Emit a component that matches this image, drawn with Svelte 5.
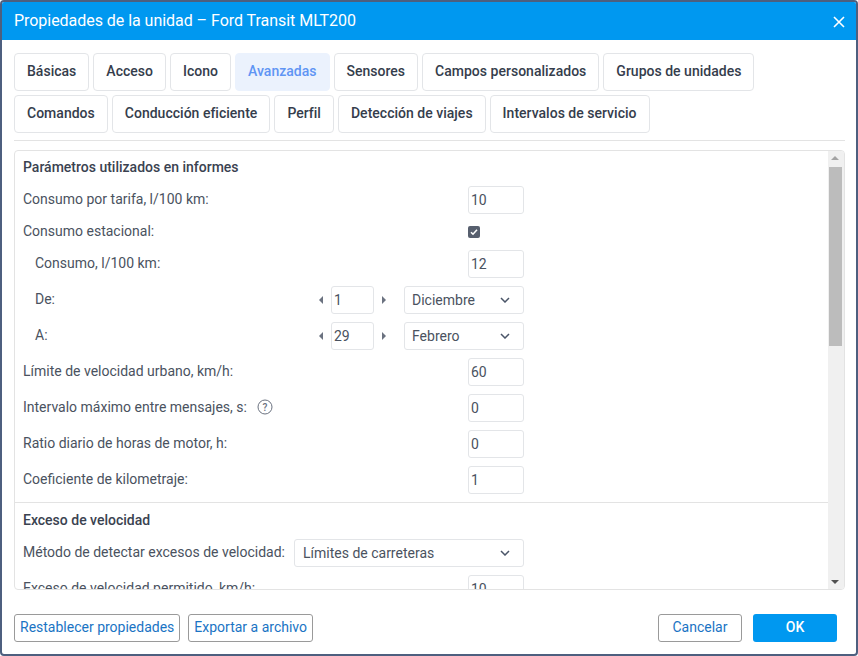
<script>
  const tabRows = [
    ['Básicas', 'Acceso', 'Icono', 'Avanzadas', 'Sensores', 'Campos personalizados', 'Grupos de unidades'],
    ['Comandos', 'Conducción eficiente', 'Perfil', 'Detección de viajes', 'Intervalos de servicio']
  ];
</script>

<div class="window">
  <header class="head">
    <h1>Propiedades de la unidad – Ford Transit MLT200</h1>
    <svg class="close" width="14" height="14" viewBox="0 0 14 14" aria-hidden="true">
      <path d="M2 2l10 10M12 2L2 12" stroke="#fff" stroke-width="1.6" fill="none" />
    </svg>
  </header>

  <div class="body">
    <nav class="tabs">
      {#each tabRows as row}
        <div class="tabrow">
          {#each row as t}
            <button class="tab" class:active={t === 'Avanzadas'}>{t}</button>
          {/each}
        </div>
      {/each}
    </nav>
    <div class="rule"></div>

    <section class="panel">
      <div class="scroll">
        <div class="group">
          <h2>Parámetros utilizados en informes</h2>
          <div class="rows">
            <div class="row"><span>Consumo por tarifa, l/100 km:</span><span class="input">10</span></div>
            <div class="row short"><span>Consumo estacional:</span>
              <span class="checkwrap"><span class="check">
                <svg width="8" height="8" viewBox="0 0 8 8" aria-hidden="true"><path d="M1 4.2l2 2 4-4.4" stroke="#fff" stroke-width="1.6" fill="none" /></svg>
              </span></span>
            </div>
            <div class="row indent"><span>Consumo, l/100 km:</span><span class="input">12</span></div>
            <div class="row indent"><span>De:</span>
              <div class="date">
                <span class="arrow left"></span><span class="input day">1</span><span class="arrow right"></span>
                <span class="select month">Diciembre<svg class="chev" width="10" height="6" viewBox="0 0 10 6" aria-hidden="true"><path d="M1 1l4 4 4-4" stroke="#4a5568" stroke-width="1.5" fill="none" /></svg></span>
              </div>
            </div>
            <div class="row indent"><span>A:</span>
              <div class="date">
                <span class="arrow left"></span><span class="input day">29</span><span class="arrow right"></span>
                <span class="select month">Febrero<svg class="chev" width="10" height="6" viewBox="0 0 10 6" aria-hidden="true"><path d="M1 1l4 4 4-4" stroke="#4a5568" stroke-width="1.5" fill="none" /></svg></span>
              </div>
            </div>
            <div class="row"><span>Límite de velocidad urbano, km/h:</span><span class="input">60</span></div>
            <div class="row"><span class="withhelp">Intervalo máximo entre mensajes, s:
              <svg width="16" height="16" viewBox="0 0 16 16" aria-hidden="true"><circle cx="8" cy="8" r="7" stroke="#6b7280" fill="none" /><text x="8" y="11.5" text-anchor="middle" class="q">?</text></svg></span>
              <span class="input">0</span></div>
            <div class="row"><span>Ratio diario de horas de motor, h:</span><span class="input">0</span></div>
            <div class="row"><span>Coeficiente de kilometraje:</span><span class="input">1</span></div>
          </div>
        </div>
        <div class="group second">
          <h2>Exceso de velocidad</h2>
          <div class="rows">
            <div class="row"><span>Método de detectar excesos de velocidad:</span>
              <span class="select wide">Límites de carreteras<svg class="chev" width="10" height="6" viewBox="0 0 10 6" aria-hidden="true"><path d="M1 1l4 4 4-4" stroke="#4a5568" stroke-width="1.5" fill="none" /></svg></span>
            </div>
            <div class="row"><span>Exceso de velocidad permitido, km/h:</span><span class="input">10</span></div>
          </div>
        </div>
      </div>
      <div class="scrollbar">
        <span class="sb-up"></span>
        <span class="thumb"></span>
        <span class="sb-down"></span>
      </div>
    </section>

    <footer class="foot">
      <div class="left">
        <button class="btn">Restablecer propiedades</button>
        <button class="btn">Exportar a archivo</button>
      </div>
      <div class="right">
        <button class="btn cancel">Cancelar</button>
        <button class="ok">OK</button>
      </div>
    </footer>
  </div>
</div>

<style>
  :global(body) {
    margin: 0;
    background: #fff;
  }
  .window {
    box-sizing: border-box;
    width: 858px;
    height: 656px;
    border: 2px solid #4d5f7f;
    border-radius: 4px;
    background: #fff;
    display: flex;
    flex-direction: column;
    font-family: Roboto, sans-serif;
    font-size: 14px;
    color: #4a5260;
    overflow: hidden;
  }
  .head {
    height: 38px;
    flex: none;
    background: #0098f0;
    display: flex;
    align-items: center;
    justify-content: space-between;
    padding: 0 10px 0 12px;
  }
  h1 {
    margin: 0 0 2px;
    font-size: 16px;
    font-weight: 400;
    letter-spacing: -0.04px;
    color: #fff;
  }
  .close {
    display: block;
    margin-top: 1px;
  }
  .body {
    flex: 1;
    display: flex;
    flex-direction: column;
    padding: 13px 11px 0 12px;
    min-height: 0;
  }
  .tabs {
    display: flex;
    flex-direction: column;
    gap: 4px;
  }
  .tabrow {
    display: flex;
    gap: 4px;
  }
  .tab {
    box-sizing: border-box;
    height: 38px;
    padding: 0 12px 2px;
    border: 1px solid #e3e5e8;
    border-radius: 4px;
    background: #fff;
    font: 500 14px Roboto, sans-serif;
    letter-spacing: 0.015px;
    color: #353d4c;
  }
  .tab.active {
    background: #ebf2fd;
    border-color: #ebf2fd;
    color: #5f95f4;
  }
  .rule {
    height: 1px;
    background: #e3e3e3;
    margin: 7px 0 9px;
    flex: none;
  }
  .panel {
    box-sizing: border-box;
    height: 440px;
    flex: none;
    border: 1px solid #e3e3e3;
    border-radius: 4px;
    display: flex;
    overflow: hidden;
  }
  .scroll {
    flex: 1;
    min-width: 0;
    overflow: hidden;
  }
  .group {
    padding: 7px 8px 8px;
  }
  .group.second {
    padding-top: 8px;
    border-top: 1px solid #e3e3e3;
  }
  h2 {
    margin: 0 0 10px;
    font-size: 14px;
    font-weight: 500;
    line-height: 18px;
    color: #3a4250;
  }
  .rows {
    display: flex;
    flex-direction: column;
    gap: 8px;
    width: 501px;
  }
  .row {
    display: flex;
    align-items: center;
    justify-content: space-between;
    height: 28px;
    white-space: nowrap;
  }
  .row > span:first-child {
    position: relative;
    top: -1px;
  }
  .row.short {
    height: 20px;
  }
  .row.indent {
    padding-left: 12px;
  }
  .withhelp {
    display: inline-flex;
    align-items: center;
    gap: 10px;
  }
  .q {
    font: 500 10px Roboto, sans-serif;
    fill: #6b7280;
  }
  .input {
    box-sizing: border-box;
    width: 56px;
    height: 28px;
    line-height: 26px;
    border: 1px solid #e3e5e8;
    border-radius: 3px;
    padding-left: 2px;
    background: #fff;
    color: #4a5260;
  }
  .input.day {
    width: 43px;
  }
  .checkwrap {
    width: 56px;
    display: flex;
  }
  .check {
    width: 12px;
    height: 12px;
    border-radius: 2px;
    background: #575f6e;
    display: flex;
    align-items: center;
    justify-content: center;
  }
  .date {
    display: flex;
    align-items: center;
  }
  .arrow {
    width: 0;
    height: 0;
    border-top: 4px solid transparent;
    border-bottom: 4px solid transparent;
  }
  .arrow.left {
    border-right: 4px solid #6b7280;
    margin-right: 8px;
  }
  .arrow.right {
    border-left: 4px solid #6b7280;
    margin: 0 18px 0 8px;
  }
  .select {
    box-sizing: border-box;
    height: 28px;
    border: 1px solid #e3e5e8;
    border-radius: 3px;
    padding: 0 13px 0 7px;
    display: flex;
    align-items: center;
    justify-content: space-between;
    color: #4a5260;
  }
  .select.month {
    width: 120px;
  }
  .select.wide {
    width: 230px;
    padding-left: 8px;
  }
  .chev {
    display: block;
  }
  .scrollbar {
    width: 16px;
    flex: none;
    background: #f0f0f0;
    position: relative;
  }
  .sb-up, .sb-down {
    position: absolute;
    left: 3px;
    width: 0;
    height: 0;
    border-left: 4px solid transparent;
    border-right: 4px solid transparent;
  }
  .sb-up {
    top: 5px;
    border-bottom: 4px solid #a3a3a3;
  }
  .sb-down {
    bottom: 5px;
    border-top: 4px solid #505050;
  }
  .thumb {
    position: absolute;
    top: 16px;
    left: 1px;
    width: 13px;
    height: 179px;
    background: #bcbcbc;
  }
  .foot {
    display: flex;
    justify-content: space-between;
    padding-top: 24px;
    padding-right: 8px;
  }
  .left, .right {
    display: flex;
  }
  .left {
    gap: 8px;
  }
  .right {
    gap: 11px;
  }
  .btn {
    box-sizing: border-box;
    height: 28px;
    padding: 0 5px 2px;
    border: 1px solid #9a9a9a;
    border-radius: 3px;
    background: #fff;
    font: 400 14px Roboto, sans-serif;
    color: #1a74c4;
  }
  .btn.cancel {
    width: 84px;
  }
  .ok {
    box-sizing: border-box;
    width: 84px;
    height: 28px;
    padding: 0 0 2px;
    border: none;
    border-radius: 3px;
    background: #0098f0;
    color: #fff;
    font: 500 14px Roboto, sans-serif;
  }
</style>
